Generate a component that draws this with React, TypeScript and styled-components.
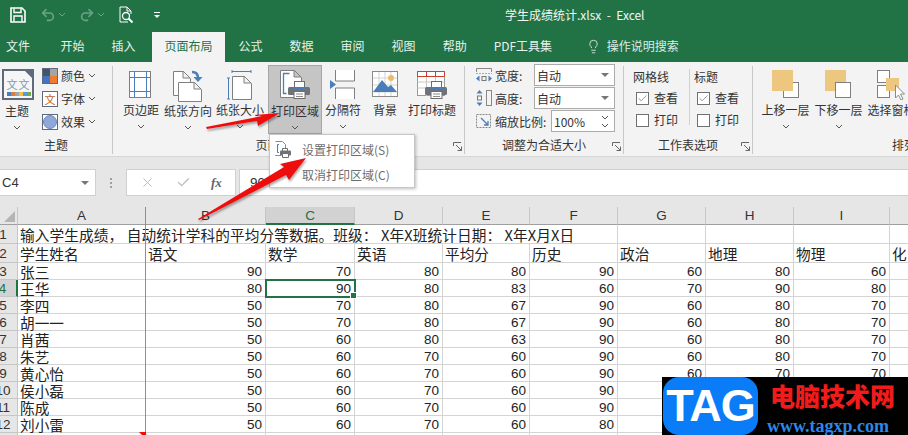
import React from 'react'
import styled, { createGlobalStyle } from 'styled-components'
import { Lightbulb, Redo2, Undo2, X, Check } from 'lucide-react'

const CJK = `"Noto Sans CJK SC", "Liberation Sans", sans-serif`
const GREEN = '#217346'

const Global = createGlobalStyle`
  html, body { margin: 0; padding: 0; background: #fff; }
  * { box-sizing: border-box; }
`

function Chevron({ color = '#555' }: { color?: string }) {
  return (
    <svg width="8" height="5" viewBox="0 0 8 5">
      <path d="M1 1l3 3 3-3" fill="none" stroke={color} />
    </svg>
  )
}

function Printer({ x, y }: { x: number; y: number }) {
  return (
    <g transform={`translate(${x} ${y})`}>
      <rect x="6.500" y="0.500" width="10" height="7" fill="#fff" stroke="#6d6d6d" />
      <rect x="0" y="6" width="22" height="8" rx="1.500" fill="#6f7377" />
      <path d="M5 7.500h13" stroke="#4a7ebb" strokeWidth="2" />
      <rect x="6" y="10.500" width="11" height="7" fill="#fff" stroke="#6d6d6d" />
      <path d="M8 13h7M8 15.500h7" stroke="#8a8a8a" />
    </g>
  )
}

function Page({ x, y, w, h }: { x: number; y: number; w: number; h: number }) {
  return (
    <path
      d={`M${x + 0.5} ${y + 0.5}h${w - 7}l7 7v${h - 7}h-${w}z M${x + w - 7} ${y}v7h7`}
      fill="#fff"
      stroke="#7f7f7f"
    />
  )
}

const icons: Record<string, React.ReactNode> = {
  margins: (
    <svg width="26" height="30" viewBox="0 0 26 30">
      <rect x="1.500" y="1.500" width="21" height="26" fill="#fff" stroke="#7f7f7f" />
      <path d="M6.500 1.500v26M18.500 1.500v26M1.500 7.500h21M1.500 21.500h21" stroke="#4a7ebb" />
    </svg>
  ),
  orientation: (
    <svg width="32" height="32" viewBox="0 0 32 32">
      <Page x={1} y={1} w={17} h={24} />
      <Page x={6} y={12} w={23} h={19} />
      <path d="M20 2c4 0 6 2 6 6" fill="none" stroke="#4a7ebb" strokeWidth="2.500" />
      <path d="M21.500 7h9l-4.500 5z" fill="#4a7ebb" />
    </svg>
  ),
  size: (
    <svg width="26" height="30" viewBox="0 0 26 30">
      <path d="M5 1.500h19M5 0v3M24 0v3M1.500 8v21M0 8h3M0 29h3" stroke="#4a7ebb" />
      <Page x={5} y={6} w={19} h={23} />
    </svg>
  ),
  printArea: (
    <svg width="32" height="32" viewBox="0 0 32 32">
      <Page x={1} y={0} w={21} h={27} />
      <path d="M10.500 3.500h-6v20h3" fill="none" stroke="#4a7ebb" strokeWidth="1.300" />
      <Printer x={9} y={11} />
    </svg>
  ),
  breaks: (
    <svg width="26" height="30" viewBox="0 0 26 30">
      <path d="M5.500 0v11h19V0M5.500 29V18h19v11" fill="#fff" stroke="#7f7f7f" />
      <path d="M0 10l6 4.500-6 4.500z" fill="#4a7ebb" />
    </svg>
  ),
  background: (
    <svg width="28" height="28" viewBox="0 0 28 28">
      <rect x="1.500" y="1.500" width="25" height="25" fill="#fff" stroke="#8a8a8a" />
      <path d="M2 8h24M2 15h24M2 22h24M8 2v24M14 2v24M20 2v24" stroke="#d3d3d3" />
      <circle cx="20" cy="8" r="3" fill="#edb96b" />
      <path d="M2 22l9-12 6 7 3-2 6 7z" fill="#4a7ebb" />
    </svg>
  ),
  printTitle: (
    <svg width="32" height="30" viewBox="0 0 32 30">
      <rect x="1.500" y="1.500" width="27" height="24" fill="#fff" stroke="#9a9a9a" />
      <path d="M1.500 1.500h27v5h-27zM10.500 1.500v5M19.500 1.500v5" fill="none" stroke="#c8432b" />
      <path d="M1.500 12h27M1.500 18h27M10.500 7v19M19.500 7v19" stroke="#c9c9c9" />
      <Printer x={9} y={11} />
    </svg>
  ),
  forward: (
    <svg width="28" height="30" viewBox="0 0 28 30">
      <rect x="11.500" y="12.500" width="15" height="15" fill="#fff" stroke="#7f7f7f" />
      <rect x="0" y="0" width="21" height="21" fill="#edc67f" />
    </svg>
  ),
  backward: (
    <svg width="28" height="30" viewBox="0 0 28 30">
      <rect x="0" y="0" width="21" height="21" fill="#edc67f" />
      <rect x="10.500" y="12.500" width="15" height="15" fill="#fff" stroke="#7f7f7f" />
    </svg>
  ),
  pane: (
    <svg width="30" height="30" viewBox="0 0 30 30">
      <rect x="0.500" y="0.500" width="12" height="12" fill="#fff" stroke="#7f7f7f" />
      <rect x="0.500" y="15.500" width="12" height="12" fill="#fff" stroke="#7f7f7f" />
      <rect x="9" y="8" width="13" height="13" fill="#edc67f" />
      <path d="M18.500 15v13l3-3 2.500 5 2-1-2.500-5h4z" fill="#fff" stroke="#8a8a8a" />
    </svg>
  ),
}

const Launcher = () => (
  <svg width="9" height="9" viewBox="0 0 9 9">
    <path d="M.5 4V.5H8M8.500 8.500L3 3M8.500 4.500v4h-4" fill="none" stroke="#666" />
  </svg>
)

const Window = styled.div`
  position: relative;
  width: 908px;
  height: 435px;
  overflow: hidden;
  display: flex;
  flex-direction: column;
  background: #fff;
  font-family: ${CJK};
`
const TitleBar = styled.header`
  position: relative;
  flex: 0 0 31px;
  display: flex;
  align-items: center;
  background: ${GREEN};
  color: #fff;
  padding: 0 0 2px 10px;
`
const QatSlot = styled.span<{ $w: number }>`
  display: flex;
  align-items: center;
  width: ${(p) => p.$w}px;
  gap: 2px;
`
const DocTitle = styled.span`
  margin-left: 342px;
  font-size: 12px;
  white-space: pre;
  color: #f2f7f4;
`
const TabBar = styled.nav`
  flex: 0 0 31px;
  display: flex;
  align-items: stretch;
  background: ${GREEN};
  color: #e8f1ec;
  font-size: 12px;
  line-height: 28px;
`
const Tab = styled.span<{ $active?: boolean }>`
  display: flex;
  align-items: center;
  padding: 0 13.5px 1px;
  white-space: nowrap;
  &:first-child { padding: 0 17px 1px 6px; }
  ${(p) => p.$active && `
    margin: 1px 0 0 3px;
    padding: 0 12.5px 2px;
    background: #f3f3f3;
    color: ${GREEN};
  `}
`
const SearchTab = styled.span`
  display: flex;
  align-items: center;
  gap: 6px;
  margin-left: 20px;
  padding-bottom: 1px;
  color: #dfeae4;
`
const Ribbon = styled.section`
  flex: 0 0 93px;
  display: flex;
  background: #f3f3f3;
  border-bottom: 1px solid #d6d6d6;
  color: #333;
  font-size: 12px;
`
const Group = styled.div<{ $w: number; $last?: boolean }>`
  flex: 0 0 ${(p) => p.$w}px;
  display: flex;
  flex-direction: column;
  margin: 4px 0 2px;
  border-right: ${(p) => (p.$last ? '0' : '1px solid #c8c8c8')};
`
const GroupBody = styled.div<{ $pad?: number }>`
  flex: 1;
  display: flex;
  padding-left: ${(p) => p.$pad ?? 0}px;
`
const GroupFooter = styled.div<{ $leading?: number }>`
  flex: 0 0 20px;
  display: grid;
  grid-template-columns: ${(p) => (p.$leading ? `${p.$leading}px auto` : '1fr auto 1fr')};
  align-items: center;
  white-space: nowrap;
`
const GroupLabel = styled.span<{ $inset?: number }>`
  grid-column: 2;
  padding-right: ${(p) => p.$inset ?? 0}px;
`
const LauncherSlot = styled.span`
  grid-column: 3;
  justify-self: end;
  display: flex;
  padding: 4px 2px 0 0;
`
const LargeButton = styled.div<{ $w: number; $hot?: boolean }>`
  flex: 0 0 ${(p) => p.$w}px;
  min-width: 0;
  display: flex;
  flex-direction: column;
  align-items: center;
  white-space: nowrap;
  height: 69px;
  margin-top: -1px;
  padding-top: 4px;
  background: ${(p) => (p.$hot ? '#c5c5c5' : 'transparent')};
  border: 1px solid ${(p) => (p.$hot ? '#a6a6a6' : 'transparent')};
`
const IconSlot = styled.span`
  flex: 0 0 31px;
  display: flex;
  justify-content: center;
  align-items: flex-start;
`
const LargeLabel = styled.span`
  line-height: 17px;
`
const ChevronSlot = styled.span`
  display: flex;
  margin-top: 6px;
`
const ThemeTile = styled.div`
  position: relative;
  width: 32px;
  height: 31px;
  margin: 3px 0 0 2px;
  border: 2px solid #5f6b7c;
  background: #f6f6f6;
  display: flex;
  justify-content: center;
  gap: 1px;
  padding-top: 7px;
  color: #8396a8;
  font-size: 11px;
  line-height: 12px;
  &::before {
    content: '';
    position: absolute;
    right: 0;
    top: 0;
    border-top: 7px solid #5f6b7c;
    border-left: 7px solid transparent;
  }
`
const ThemeDots = styled.svg`
  position: absolute;
  left: 3px;
  bottom: 2px;
`
const ThemeColumn = styled.div`
  display: flex;
  flex-direction: column;
  align-items: center;
`
const ThemeName = styled.span`
  line-height: 17px;
  margin-top: 2px;
`
const ThemeChevron = styled.span`
  display: flex;
  margin-top: 6px;
`
const ThemeList = styled.ul`
  list-style: none;
  margin: 1px 0 0 8px;
  padding: 0;
  display: flex;
  flex-direction: column;
  gap: 6px;
`
const ThemeItem = styled.li`
  display: flex;
  align-items: center;
  gap: 3px;
  height: 17px;
`
const Swatch = styled.span`
  display: flex;
  align-items: center;
  justify-content: center;
  width: 16px;
  height: 16px;
  border: 1px solid #5f6b7c;
  background: #fff;
  margin-right: 0;
  color: #c0602a;
  font-size: 11px;
  overflow: hidden;
`
const ScaleRows = styled.div`
  display: flex;
  flex-direction: column;
  gap: 1px;
  margin-top: -2px;
`
const ScaleRow = styled.div`
  display: flex;
  align-items: center;
  height: 22px;
`
const ScaleLabel = styled.span<{ $w: number }>`
  width: ${(p) => p.$w}px;
  margin-left: 3px;
  white-space: nowrap;
`
const SelectBox = styled.div<{ $w: number }>`
  width: ${(p) => p.$w}px;
  height: 22px;
  display: flex;
  align-items: center;
  justify-content: space-between;
  padding: 0 5px 0 2px;
  background: #fff;
  border: 1px solid #ababab;
  font-size: 12px;
`
const DownTri = styled.i`
  width: 0;
  height: 0;
  border-left: 4px solid transparent;
  border-right: 4px solid transparent;
  border-top: 4px solid #777;
`
const Spinner = styled.span`
  display: flex;
  flex-direction: column;
  gap: 3px;
`
const OptionColumn = styled.div<{ $w: number; $rule?: boolean; $inset?: number }>`
  flex: 0 0 ${(p) => p.$w}px;
  display: flex;
  flex-direction: column;
  gap: 4px;
  padding-left: ${(p) => p.$inset ?? 0}px;
  border-right: ${(p) => (p.$rule ? '1px solid #d0d0d0' : '0')};
  height: 56px;
  margin-top: 3px;
`
const OptionHead = styled.span`
  line-height: 15px;
  margin-bottom: 1px;
`
const OptionRow = styled.label`
  display: flex;
  align-items: center;
  gap: 5px;
  height: 14px;
  margin: 2px 0 2px 3px;
  line-height: 14px;
`
const CheckBox = styled.span`
  width: 13px;
  height: 13px;
  display: flex;
  align-items: center;
  justify-content: center;
  background: #fff;
  border: 1px solid #707070;
  color: #555;
`
const FormulaBar = styled.section`
  flex: 0 0 50px;
  display: flex;
  align-items: flex-start;
  padding-top: 12px;
  background: #e6e6e6;
`
const NameBox = styled.div`
  width: 96px;
  height: 27px;
  display: flex;
  align-items: center;
  justify-content: space-between;
  padding: 0 6px 0 2px;
  background: #fff;
  border: 1px solid #d0d0d0;
  border-left: 0;
  font: 13px "Liberation Sans", sans-serif;
  color: #333;
`
const Grip = styled.span`
  width: 30px;
  height: 27px;
  display: flex;
  flex-direction: column;
  align-items: center;
  justify-content: center;
  gap: 2px;
  i { width: 2px; height: 2px; background: #a0a0a0; }
`
const FxBox = styled.div`
  width: 110px;
  height: 27px;
  display: flex;
  align-items: center;
  justify-content: space-around;
  padding: 0 3px;
  background: #fff;
  border: 1px solid #d0d0d0;
  color: #bdbdbd;
`
const FxMark = styled.em`
  font: italic bold 13px "Liberation Serif", serif;
  color: #666;
`
const FormulaInput = styled.div`
  flex: 1;
  height: 27px;
  margin-left: 3px;
  padding-left: 10px;
  display: flex;
  align-items: center;
  background: #fff;
  border: 1px solid #d0d0d0;
  border-right: 0;
  font: 13.5px "Liberation Sans", sans-serif;
  color: #333;
`
const Sheet = styled.section`
  position: relative;
  flex: 1;
  display: grid;
  grid-template-columns: 18px 128px 120px 89px 88px 87px 88px 88px 88px 96px 88px;
  grid-template-rows: 18px 19px 19px repeat(11, 17px);
  width: 978px;
  color: #222;
  font-size: 14.67px;
`
const ColHead = styled.div<{ $on?: boolean }>`
  display: flex;
  align-items: center;
  justify-content: center;
  background: ${(p) => (p.$on ? '#d2d2d2' : '#e6e6e6')};
  border-right: 1px solid #c6c6c6;
  border-bottom: ${(p) => (p.$on ? `2px solid ${GREEN}` : '1px solid #9f9f9f')};
  color: ${(p) => (p.$on ? GREEN : '#333')};
  font: 13.5px "Liberation Sans", sans-serif;
`
const Corner = styled.div`
  background: #e6e6e6;
  border-right: 1px solid #c6c6c6;
  border-bottom: 1px solid #9f9f9f;
  display: flex;
  align-items: flex-end;
  justify-content: flex-end;
  padding: 0 2px 2px 0;
  &::after {
    content: '';
    border-left: 11px solid transparent;
    border-bottom: 11px solid #b5b5b5;
  }
`
const RowHead = styled.div<{ $on?: boolean }>`
  display: flex;
  align-items: center;
  justify-content: center;
  padding-right: 11px;
  white-space: nowrap;
  background: ${(p) => (p.$on ? '#d2d2d2' : '#e6e6e6')};
  border-right: ${(p) => (p.$on ? `2px solid ${GREEN}` : '1px solid #c6c6c6')};
  border-bottom: 1px solid #c6c6c6;
  color: ${(p) => (p.$on ? GREEN : '#333')};
  font: 13.5px "Liberation Sans", sans-serif;
`
const Cell = styled.div<{ $num?: boolean; $span?: number; $sel?: boolean; $track?: number }>`
  position: relative;
  display: flex;
  align-items: center;
  justify-content: ${(p) => (p.$num ? 'flex-end' : 'flex-start')};
  padding: 0 3px 0 2px;
  white-space: pre;
  overflow: visible;
  min-width: 0;
  grid-column: span ${(p) => p.$span ?? 1};
  letter-spacing: ${(p) => p.$track ?? 0}px;
  border-right: 1px solid #d4d4d4;
  border-bottom: 1px solid #d4d4d4;
  font-family: ${(p) => (p.$num ? '"Liberation Sans", sans-serif' : CJK)};
  font-size: ${(p) => (p.$num ? '13.5px' : '14.67px')};
  ${(p) => p.$sel && `
    outline: 2px solid ${GREEN};
    outline-offset: -1px;
    z-index: 1;
    &::after {
      content: '';
      position: absolute;
      right: -3px;
      bottom: -3px;
      width: 5px;
      height: 5px;
      background: ${GREEN};
      border: 1px solid #fff;
    }
  `}
`
const PrintBreak = styled.i`
  position: absolute;
  left: 145px;
  top: 0;
  bottom: 0;
  width: 1px;
  background: #8f8f8f;
  z-index: 1;
`
const MenuPop = styled.div`
  position: absolute;
  left: 269px;
  top: 134px;
  width: 146px;
  height: 54px;
  background: #fff;
  border: 1px solid #c6c6c6;
  box-shadow: 1px 1px 3px rgba(0, 0, 0, 0.25);
  z-index: 3;
  padding-top: 2px;
  color: #6e6e6e;
  font-size: 12px;
`
const MenuItem = styled.div`
  position: relative;
  height: 25px;
  padding-left: 32px;
  display: flex;
  align-items: center;
  white-space: nowrap;
`
const MenuGlyph = styled.svg`
  position: absolute;
  left: 4px;
  top: 3px;
`
const Overlay = styled.svg`
  position: absolute;
  inset: 0;
  z-index: 4;
  pointer-events: none;
`
const Stamp = styled.aside`
  position: absolute;
  left: 662px;
  top: 377px;
  width: 246px;
  height: 58px;
  display: flex;
  background: #000;
  z-index: 5;
`
const StampLogo = styled.div`
  width: 95px;
  margin-left: 1px;
  display: flex;
  align-items: center;
  justify-content: center;
  background: #0b7cf7;
  border-radius: 16px;
  color: #fff;
  font: bold 45px "Liberation Sans", sans-serif;
  letter-spacing: -1px;
`
const StampText = styled.div`
  margin-left: 9px;
  display: flex;
  flex-direction: column;
`
const StampName = styled.span`
  color: #f01c1c;
  font: 900 25px/30px ${CJK};
  margin: 3px 0 0 3px;
  white-space: nowrap;
`
const StampUrl = styled.span`
  color: #2f86e6;
  font: bold 18px/20px "Liberation Serif", serif;
  margin-top: 6px;
`

const tabs = ['开始', '插入']
const tabsAfter = ['公式', '数据', '审阅', '视图', '帮助', 'PDF工具集']
const columns = ['A', 'B', 'C', 'D', 'E', 'F', 'G', 'H', 'I', '']
const subjects = ['学生姓名', '语文', '数学', '英语', '平均分', '历史', '政治', '地理', '物理', '化']
// last three rows only list A-F: the rest sits behind the watermark
const students: [string, ...number[]][] = [
  ['张三', 90, 70, 80, 80, 90, 60, 80, 60],
  ['王华', 80, 90, 80, 83, 60, 70, 90, 80],
  ['李四', 50, 70, 80, 67, 90, 60, 80, 70],
  ['胡一一', 50, 70, 80, 67, 90, 60, 80, 70],
  ['肖茜', 50, 60, 80, 63, 90, 60, 80, 70],
  ['朱艺', 50, 60, 70, 60, 90, 60, 80, 70],
  ['黄心怡', 50, 60, 70, 60, 90, 60, 70, 70],
  ['侯小磊', 50, 60, 70, 60, 90],
  ['陈成', 50, 60, 70, 60, 90],
  ['刘小雷', 50, 60, 70, 60, 80],
  ['', 0],
]

function Large({ icon, label, w, hot, drop = true }: { icon: string; label: string; w: number; hot?: boolean; drop?: boolean }) {
  return (
    <LargeButton $w={w} $hot={hot}>
      <IconSlot>{icons[icon]}</IconSlot>
      <LargeLabel>{label}</LargeLabel>
      {drop && (
        <ChevronSlot>
          <Chevron />
        </ChevronSlot>
      )}
    </LargeButton>
  )
}

function Footer({ label, launcher, inset }: { label: string; launcher?: boolean; inset?: number }) {
  return (
    <GroupFooter>
      <GroupLabel $inset={inset}>{label}</GroupLabel>
      {launcher && (
        <LauncherSlot>
          <Launcher />
        </LauncherSlot>
      )}
    </GroupFooter>
  )
}

export default function App() {
  return (
    <Window>
      <Global />
      <TitleBar>
        <QatSlot $w={30}>
          <svg width="16" height="16" viewBox="0 0 16 16">
            <path d="M1 1h11l3 3v11H1z" fill="none" stroke="#fff" strokeWidth="1.600" />
            <path d="M4 1.500v4h7v-4M4 14.500V9h8v5.500" fill="none" stroke="#fff" strokeWidth="1.400" />
          </svg>
        </QatSlot>
        <QatSlot $w={39}>
          <Undo2 size={16} color="#6da488" strokeWidth={2.4} />
          <Chevron color="#6da488" />
        </QatSlot>
        <QatSlot $w={40}>
          <Redo2 size={16} color="#6da488" strokeWidth={2.4} />
          <Chevron color="#6da488" />
        </QatSlot>
        <QatSlot $w={34}>
          <svg width="16" height="18" viewBox="0 0 16 18">
            <path d="M9 16H1V1h7l4 4v3M8 1v4h4" fill="none" stroke="#fff" />
            <circle cx="7" cy="10" r="3.500" fill="none" stroke="#fff" strokeWidth="1.300" />
            <path d="M9.500 12.500l4 4" stroke="#fff" strokeWidth="2" />
          </svg>
        </QatSlot>
        <QatSlot $w={10}>
          <svg width="8" height="8" viewBox="0 0 8 8">
            <path d="M1 1.500h6" stroke="#fff" />
            <path d="M1 4h6L4 7z" fill="#fff" />
          </svg>
        </QatSlot>
        <DocTitle>学生成绩统计.xlsx  -  Excel</DocTitle>
      </TitleBar>

      <TabBar>
        <Tab>文件</Tab>
        {tabs.map((t) => (
          <Tab key={t}>{t}</Tab>
        ))}
        <Tab $active>页面布局</Tab>
        {tabsAfter.map((t) => (
          <Tab key={t}>{t}</Tab>
        ))}
        <SearchTab>
          <Lightbulb size={15} strokeWidth={1.4} />
          操作说明搜索
        </SearchTab>
      </TabBar>

      <Ribbon>
        <Group $w={113}>
          <GroupBody>
            <ThemeColumn>
              <ThemeTile>
                <span>文</span>
                <span>文</span>
                <ThemeDots width="24" height="4" viewBox="0 0 24 4">
                  <path d="M0 0h4v4H0z" fill="#4a7ebb" />
                  <path d="M4 0h4v4H4z" fill="#e07b39" />
                  <path d="M8 0h4v4H8z" fill="#a5a5a5" />
                  <path d="M12 0h4v4h-4z" fill="#f2c23c" />
                  <path d="M16 0h4v4h-4z" fill="#5a9bd5" />
                  <path d="M20 0h4v4h-4z" fill="#70ad47" />
                </ThemeDots>
              </ThemeTile>
              <ThemeName>主题</ThemeName>
              <ThemeChevron>
                <Chevron />
              </ThemeChevron>
            </ThemeColumn>
            <ThemeList>
              <ThemeItem>
                <Swatch>
                  <svg width="14" height="14" viewBox="0 0 14 14">
                    <path d="M0 0h7v7H0z" fill="#44546a" />
                    <path d="M7 0h7v7H7z" fill="#a5a5a5" />
                    <path d="M0 7h7v7H0z" fill="#4472c4" />
                    <path d="M7 7h7v7H7z" fill="#ed7d31" />
                  </svg>
                </Swatch>
                颜色
                <Chevron />
              </ThemeItem>
              <ThemeItem>
                <Swatch>文</Swatch>
                字体
                <Chevron />
              </ThemeItem>
              <ThemeItem>
                <Swatch>
                  <svg width="14" height="14" viewBox="0 0 14 14">
                    <circle cx="7" cy="7" r="6.500" fill="#8fa8d8" stroke="#6d87bd" />
                  </svg>
                </Swatch>
                效果
                <Chevron />
              </ThemeItem>
            </ThemeList>
          </GroupBody>
          <Footer label="主题" />
        </Group>

        <Group $w={352}>
          <GroupBody $pad={5}>
            <Large icon="margins" label="页边距" w={46} />
            <Large icon="orientation" label="纸张方向" w={48} />
            <Large icon="size" label="纸张大小" w={56} />
            <Large icon="printArea" label="打印区域" w={54} hot />
            <Large icon="breaks" label="分隔符" w={42} />
            <Large icon="background" label="背景" w={42} drop={false} />
            <Large icon="printTitle" label="打印标题" w={52} drop={false} />
          </GroupBody>
          <Footer label="页面设置" launcher inset={18} />
        </Group>

        <Group $w={159}>
          <GroupBody $pad={11}>
            <ScaleRows>
              <ScaleRow>
                <svg width="16" height="16" viewBox="0 0 16 16">
                  <path d="M.5 5V1.500h15V5" fill="none" stroke="#888" />
                  <path d="M0 6.500h16" stroke="#aaa" strokeDasharray="2 1" />
                  <path d="M0 11.500l3.500-3v6zM16 11.500l-3.500-3v6z" fill="#4a7ebb" />
                  <rect x="6" y="9.500" width="4" height="4" fill="none" stroke="#777" />
                </svg>
                <ScaleLabel $w={39}>宽度:</ScaleLabel>
                <SelectBox $w={81}>
                  自动
                  <DownTri />
                </SelectBox>
              </ScaleRow>
              <ScaleRow>
                <svg width="16" height="16" viewBox="0 0 16 16">
                  <rect x="10.500" y=".5" width="5" height="15" fill="none" stroke="#888" />
                  <path d="M3.500 0l3 3.500h-6zM3.500 16l3-3.500h-6z" fill="#4a7ebb" />
                  <rect x="1.500" y="6" width="4" height="4" fill="none" stroke="#777" />
                </svg>
                <ScaleLabel $w={39}>高度:</ScaleLabel>
                <SelectBox $w={81}>
                  自动
                  <DownTri />
                </SelectBox>
              </ScaleRow>
              <ScaleRow>
                <svg width="16" height="15" viewBox="0 0 16 15">
                  <rect x=".5" y=".5" width="14" height="13" fill="none" stroke="#888" strokeDasharray="2 1" />
                  <path d="M5 4l7 7M12 7v4H8" fill="none" stroke="#4a7ebb" strokeWidth="1.300" />
                </svg>
                <ScaleLabel $w={56}>缩放比例:</ScaleLabel>
                <SelectBox $w={64}>
                  100%
                  <Spinner>
                    <Chevron />
                    <Chevron />
                  </Spinner>
                </SelectBox>
              </ScaleRow>
            </ScaleRows>
          </GroupBody>
          <Footer label="调整为合适大小" launcher />
        </Group>

        <Group $w={129}>
          <GroupBody $pad={9}>
            <OptionColumn $w={57} $rule>
              <OptionHead>网格线</OptionHead>
              <OptionRow>
                <CheckBox>
                  <Check size={11} strokeWidth={1.3} />
                </CheckBox>
                查看
              </OptionRow>
              <OptionRow>
                <CheckBox />
                打印
              </OptionRow>
            </OptionColumn>
            <OptionColumn $w={56} $inset={4}>
              <OptionHead>标题</OptionHead>
              <OptionRow>
                <CheckBox>
                  <Check size={11} strokeWidth={1.3} />
                </CheckBox>
                查看
              </OptionRow>
              <OptionRow>
                <CheckBox />
                打印
              </OptionRow>
            </OptionColumn>
          </GroupBody>
          <Footer label="工作表选项" launcher />
        </Group>

        <Group $w={200} $last>
          <GroupBody $pad={6}>
            <Large icon="forward" label="上移一层" w={53} />
            <Large icon="backward" label="下移一层" w={53} />
            <Large icon="pane" label="选择窗格" w={53} drop={false} />
          </GroupBody>
          <GroupFooter $leading={139}>
            <GroupLabel>排列</GroupLabel>
          </GroupFooter>
        </Group>
      </Ribbon>

      <FormulaBar>
        <NameBox>
          C4
          <DownTri />
        </NameBox>
        <Grip>
          <i />
          <i />
          <i />
        </Grip>
        <FxBox>
          <X size={15} strokeWidth={1.6} />
          <Check size={15} strokeWidth={2.2} />
          <FxMark>fx</FxMark>
        </FxBox>
        <FormulaInput>90</FormulaInput>
      </FormulaBar>

      <Sheet>
        <PrintBreak />
        <Corner />
        {columns.map((c) => (
          <ColHead key={c} $on={c === 'C'}>
            {c}
          </ColHead>
        ))}

        <RowHead>1</RowHead>
        <Cell $span={6} $track={0.1}>输入学生成绩， 自动统计学科的平均分等数据。班级： X年X班统计日期： X年X月X日</Cell>
        <Cell />
        <Cell />
        <Cell />
        <Cell />

        <RowHead>2</RowHead>
        {subjects.map((s) => (
          <Cell key={s}>{s}</Cell>
        ))}

        {students.map(([name, ...scores], i) => (
          <React.Fragment key={i}>
            <RowHead $on={i === 1}>{i + 3}</RowHead>
            <Cell>{name}</Cell>
            {Array.from({ length: 9 }, (_, j) => (
              <Cell key={j} $num $sel={i === 1 && j === 1}>
                {scores[j] || ''}
              </Cell>
            ))}
          </React.Fragment>
        ))}
      </Sheet>

      <MenuPop>
        <MenuItem>
          <MenuGlyph width="18" height="18" viewBox="0 0 18 18">
            <path d="M1.500 1.500h7l3 3v4M7 15.500H1.500z" fill="#fff" stroke="#7f8b99" />
            <path d="M5 4.500H3.500v8H5" fill="none" stroke="#4a7ebb" />
            <path d="M8.500 8.500h5v3h-5z" fill="#fff" stroke="#6d6d6d" />
            <rect x="6" y="10.500" width="11" height="5" rx="1" fill="#6f7377" />
            <path d="M8.500 13.500h6v4h-6z" fill="#fff" stroke="#6d6d6d" />
          </MenuGlyph>
          设置打印区域(S)
        </MenuItem>
        <MenuItem>取消打印区域(C)</MenuItem>
      </MenuPop>

      <Overlay width="908" height="435" viewBox="0 0 908 435">
        <defs>
          <filter id="arrowShadow" x="-10%" y="-30%" width="120%" height="160%">
            <feDropShadow dx="1" dy="2" stdDeviation="1.200" floodColor="#000" floodOpacity="0.35" />
          </filter>
        </defs>
        <g fill="#ee1111" filter="url(#arrowShadow)">
          <path d="M206 127l56-11-8-1 26-2-22 13-1-5-50 8z" />
          <path d="M198 219l86-52-4-3 26-6-17 22-3-5-87 45z" />
          <path d="M139 432h7v3h-4z" />
        </g>
      </Overlay>

      <Stamp>
        <StampLogo>TAG</StampLogo>
        <StampText>
          <StampName>电脑技术网</StampName>
          <StampUrl>www.tagxp.com</StampUrl>
        </StampText>
      </Stamp>
    </Window>
  )
}
